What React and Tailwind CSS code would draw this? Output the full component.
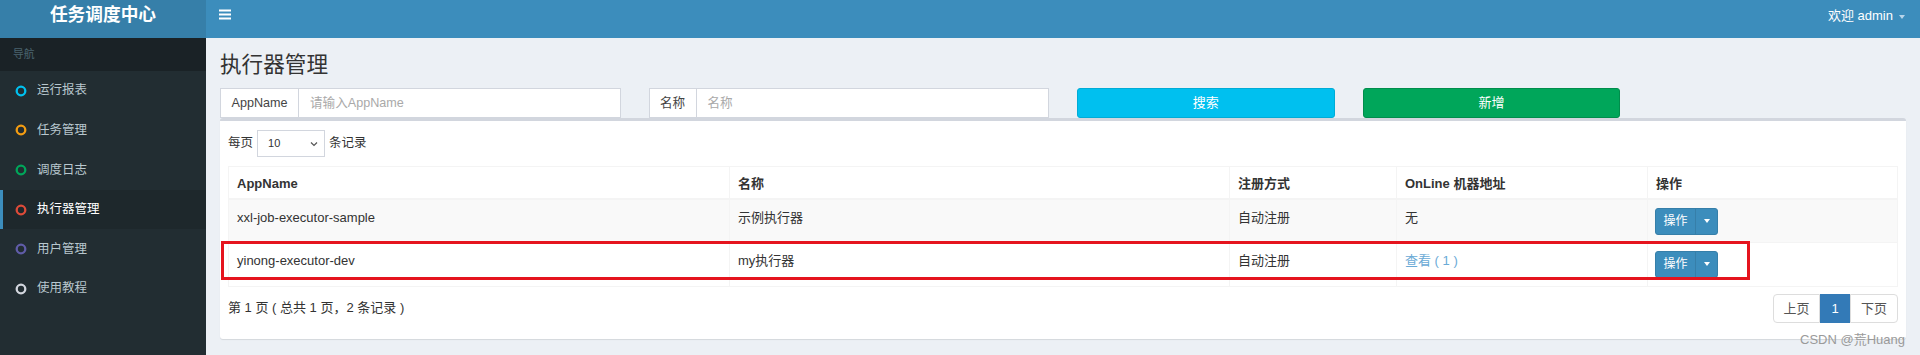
import React from "react";

const menu = [
  { label: "运行报表", color: "#00c0ef" },
  { label: "任务管理", color: "#f39c12" },
  { label: "调度日志", color: "#00a65a" },
  { label: "执行器管理", color: "#dd4b39", active: true },
  { label: "用户管理", color: "#605ca8" },
  { label: "使用教程", color: "#d2d6de" },
];

const rows = [
  { app: "xxl-job-executor-sample", name: "示例执行器", type: "自动注册", online: "无", striped: true },
  { app: "yinong-executor-dev", name: "my执行器", type: "自动注册", online: "查看 ( 1 )", link: true },
];

function Ring({ color }) {
  return (
    <svg width="12" height="12" viewBox="0 0 12 12" className="shrink-0">
      <circle cx="6" cy="6" r="4.3" fill="none" stroke={color} strokeWidth="2.3" />
    </svg>
  );
}

function OpButton() {
  return (
    <div className="flex h-[26.5px] w-[63px] rounded-[3px] border border-[#367fa9] bg-[#3c8dbc] text-white">
      <div className="flex w-[40px] items-center justify-center border-r border-[#367fa9] text-[12px]">操作</div>
      <div className="flex flex-1 items-center justify-center">
        <span className="h-0 w-0 border-x-[3.5px] border-t-[4px] border-x-transparent border-t-white" />
      </div>
    </div>
  );
}

export default function App() {
  return (
    <div className="relative flex h-[355px] w-[1920px] flex-col overflow-hidden bg-[#ecf0f5] font-['Liberation_Sans','Noto_Sans_CJK_SC',sans-serif] text-[13px] text-[#333]">
      {/* top bar */}
      <div className="flex h-[38px] shrink-0">
        <div className="flex w-[206px] items-center justify-center bg-[#367fa9] pb-[8px] text-[17.7px] font-bold text-white">
          任务调度中心
        </div>
        <div className="flex flex-1 items-start justify-between bg-[#3c8dbc] pl-[13px] pr-[15px]">
          <svg width="12" height="11" viewBox="0 0 12 11" className="mt-[9px]">
            <rect x="0" y="0.5" width="12" height="2" fill="#fff" />
            <rect x="0" y="4.5" width="12" height="2" fill="#fff" />
            <rect x="0" y="8.5" width="12" height="2" fill="#fff" />
          </svg>
          <div className="mt-[6px] flex items-center gap-[6px] text-[13px] text-white">
            <span>欢迎 admin</span>
            <span className="mt-[2px] h-0 w-0 border-x-[3px] border-t-[4px] border-x-transparent border-t-[#b8d5ea]" />
          </div>
        </div>
      </div>

      <div className="flex flex-1">
        {/* sidebar */}
        <div className="w-[206px] shrink-0 bg-[#222d32]">
          <div className="flex h-[33px] items-center bg-[#1a2226] pl-[13px] text-[10.8px] text-[#4b646f]">导航</div>
          {menu.map((m) => (
            <div
              key={m.label}
              className={
                m.active
                  ? "flex h-[39.6px] items-center gap-[10px] border-l-[3px] border-[#3c8dbc] bg-[#1e282c] pl-[12px] text-[12.5px] text-white"
                  : "flex h-[39.6px] items-center gap-[10px] border-l-[3px] border-transparent pl-[12px] text-[12.5px] text-[#b8c7ce]"
              }
            >
              <Ring color={m.color} />
              <span>{m.label}</span>
            </div>
          ))}
        </div>

        {/* content */}
        <div className="flex flex-1 flex-col px-[14px]">
          <h1 className="mt-[3px] h-[47px] text-[21.6px] leading-[47px] text-[#333]">执行器管理</h1>

          <div className="grid grid-cols-[400.5px_400.5px_257.7px_257.7px] gap-x-[28px]">
            <div className="flex h-[30px] border border-[#d2d6de] bg-white">
              <div className="flex w-[78px] items-center justify-center border-r border-[#d2d6de] text-[12.6px] text-[#444]">AppName</div>
              <div className="flex flex-1 items-center pl-[11px] text-[12.6px] text-[#a9a9a9]">请输入AppName</div>
            </div>
            <div className="flex h-[30px] border border-[#d2d6de] bg-white">
              <div className="flex w-[47px] items-center justify-center border-r border-[#d2d6de] text-[12.6px] text-[#444]">名称</div>
              <div className="flex flex-1 items-center pl-[11px] text-[12.6px] text-[#a9a9a9]">名称</div>
            </div>
            <div className="flex h-[30px] items-center justify-center rounded-[3px] border border-[#00acd6] bg-[#00c0ef] text-[13px] text-white">搜索</div>
            <div className="flex h-[30px] items-center justify-center rounded-[3px] border border-[#008d4c] bg-[#00a65a] text-[13px] text-white">新增</div>
          </div>

          {/* box */}
          <div className="relative h-[221px] rounded-[3px] border-t-[3px] border-[#d2d6de] bg-white px-[8px] pt-[9px] shadow-[0_1px_1px_rgba(0,0,0,0.1)]">
            <div className="flex h-[27px] items-center gap-[4px] text-[12.5px]">
              <span>每页</span>
              <div className="flex h-[27px] w-[68px] items-center justify-between border border-[#d2d6de] pl-[10px] pr-[6px] text-[11px]">
                <span>10</span>
                <svg width="8" height="6" viewBox="0 0 8 6">
                  <path d="M1 1.5 L4 4.5 L7 1.5" fill="none" stroke="#555" strokeWidth="1.2" />
                </svg>
              </div>
              <span>条记录</span>
            </div>

            <div className="mt-[9px] border border-[#f4f4f4]">
              <div className="grid h-[33px] grid-cols-[500px_500px_167px_251px_1fr] border-b-2 border-[#f4f4f4] font-bold">
                <div className="px-[8px] pt-[7px]">AppName</div>
                <div className="border-l border-[#f4f4f4] px-[8px] pt-[7px]">名称</div>
                <div className="border-l border-[#f4f4f4] px-[8px] pt-[7px]">注册方式</div>
                <div className="border-l border-[#f4f4f4] px-[8px] pt-[7px]">OnLine 机器地址</div>
                <div className="border-l border-[#f4f4f4] px-[8px] pt-[7px]">操作</div>
              </div>
              {rows.map((r, i) => (
                <div
                  key={r.app}
                  className={
                    "grid h-[43px] grid-cols-[500px_500px_167px_251px_1fr] " +
                    (r.striped ? "bg-[#f9f9f9] " : "bg-white ") +
                    (i === 0 ? "border-b border-[#f4f4f4]" : "")
                  }
                >
                  <div className="px-[8px] pt-[8px]">{r.app}</div>
                  <div className="border-l border-[#f4f4f4] px-[8px] pt-[8px]">{r.name}</div>
                  <div className="border-l border-[#f4f4f4] px-[8px] pt-[8px]">{r.type}</div>
                  <div className={"border-l border-[#f4f4f4] px-[8px] pt-[8px] " + (r.link ? "text-[#6aaad6]" : "")}>{r.online}</div>
                  <div className="border-l border-[#f4f4f4] px-[7px] pt-[8px]">
                    <OpButton />
                  </div>
                </div>
              ))}
            </div>

            <div className="mt-[7px] flex items-start justify-between">
              <div className="pt-[4px] text-[13px]">第 1 页 ( 总共 1 页，2 条记录 )</div>
              <div className="flex h-[29px] text-[13px]">
                <div className="flex w-[47px] items-center justify-center rounded-l-[4px] border border-[#ddd] text-[#555]">上页</div>
                <div className="flex w-[30px] items-center justify-center border border-[#337ab7] bg-[#337ab7] text-white">1</div>
                <div className="flex w-[48px] items-center justify-center rounded-r-[4px] border border-[#ddd] text-[#555]">下页</div>
              </div>
            </div>

            {/* annotation */}
            <div className="absolute left-[1px] top-[120px] h-[39px] w-[1529px] border-[3px] border-[#e5141e]" />
          </div>
        </div>
      </div>

      <div className="absolute right-[15px] top-[330px] text-[13px] text-[#9a9a9a]">CSDN @荒Huang</div>
    </div>
  );
}
